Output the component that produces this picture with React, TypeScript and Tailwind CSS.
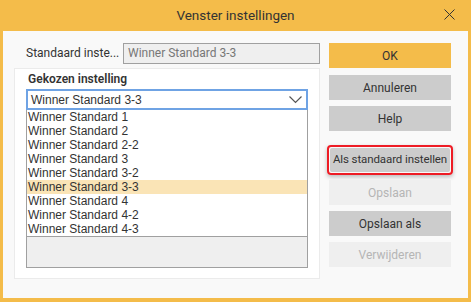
import React from 'react';

const items = [
  'Winner Standard 1',
  'Winner Standard 2',
  'Winner Standard 2-2',
  'Winner Standard 3',
  'Winner Standard 3-2',
  'Winner Standard 3-3',
  'Winner Standard 4',
  'Winner Standard 4-2',
  'Winner Standard 4-3',
];

const ui = { fontFamily: 'Roboto, "Noto Sans", sans-serif' };
const list = { fontFamily: '"Liberation Sans", Arial, sans-serif' };

function Btn({ label, kind }: { label: string; kind: 'primary' | 'gray' | 'disabled' }) {
  const cls =
    kind === 'primary'
      ? 'bg-[#f4bc4a] text-[#333]'
      : kind === 'gray'
      ? 'bg-[#cccccc] text-[#333]'
      : 'bg-[#efefef] text-[#b5b5b5]';
  return (
    <button className={`h-[25px] w-full text-[12px] whitespace-nowrap flex items-center justify-center ${cls}`} style={ui}>
      {label}
    </button>
  );
}

export default function App() {
  const selected = 'Winner Standard 3-3';
  return (
    <div className="w-[471px] h-[302px] bg-[#f4bc4a] flex flex-col px-[3px] pb-[4px]" style={ui}>
      {/* Title bar */}
      <div className="h-[31px] relative flex items-center justify-center shrink-0">
        <span className="text-[13.5px] text-[#333]">Venster instellingen</span>
        <svg className="absolute right-[13px] top-[9px]" width="11" height="11" viewBox="0 0 11 11">
          <path d="M0.5 0.5 L10.5 10.5 M10.5 0.5 L0.5 10.5" stroke="#333" strokeWidth="1" />
        </svg>
      </div>

      <div className="flex-1 bg-[#f9f9f9] flex pl-[11px] pt-[12px] gap-[9px]">
        {/* Left column */}
        <div className="w-[306px] flex flex-col">
          <div className="h-[20px] flex items-center">
            <span className="pl-[12px] w-[109px] text-[12px] text-[#333] whitespace-nowrap overflow-hidden">Standaard inste...</span>
            <div className="flex-1 h-[21px] bg-[#efefef] border border-[#a0a0a0] flex items-center px-[4px] text-[12px] text-[#777]">
              Winner Standard 3-3
            </div>
          </div>

          <div className="mt-[5px] h-[211px] bg-white border border-[#ebebeb] flex flex-col px-[11px]">
            <div className="text-[12px] font-semibold text-[#333] pt-[1px] pl-[2px] h-[20px]">Gekozen instelling</div>
            <div className="h-[21px] border-2 border-[#6fa3e4] flex items-center justify-between pl-[3px] pr-[4px] text-[12px] text-[#333]" style={list}>
              <span>{selected}</span>
              <svg width="13" height="8" viewBox="0 0 13 8">
                <path d="M0.5 0.5 L6.5 6.5 L12.5 0.5" stroke="#555" strokeWidth="1.2" fill="none" />
              </svg>
            </div>
            <div className="border-x border-[#a0a0a0] flex flex-col" style={list}>
              {items.map((it) => (
                <div
                  key={it}
                  className={`h-[14px] leading-[14px] pl-[1px] text-[12px] text-[#333] ${it === selected ? 'bg-[#fae4b6]' : ''}`}
                >
                  {it}
                </div>
              ))}
            </div>
            <div className="h-[32px] bg-[#efefef] border border-[#a0a0a0]" />
          </div>
        </div>

        {/* Right column */}
        <div className="w-[122px] flex flex-col">
          <Btn label="OK" kind="primary" />
          <div className="mt-[7px]">
            <Btn label="Annuleren" kind="gray" />
          </div>
          <div className="mt-[6px]">
            <Btn label="Help" kind="gray" />
          </div>
          <div className="mt-[14px] -mx-[2px] p-[1px] border-2 border-[#ee1c25] rounded-[4px] shadow-[0_2px_4px_rgba(0,0,0,0.25)]">
            <button className="h-[24px] w-full text-[11.5px] tracking-[-0.1px] whitespace-nowrap flex items-center justify-center bg-[#cccccc] text-[#333] rounded-[2px]" style={ui}>
              Als standaard instellen
            </button>
          </div>
          <div className="mt-[5px]">
            <Btn label="Opslaan" kind="disabled" />
          </div>
          <div className="mt-[6px]">
            <Btn label="Opslaan als" kind="gray" />
          </div>
          <div className="mt-[6px]">
            <Btn label="Verwijderen" kind="disabled" />
          </div>
        </div>
      </div>
    </div>
  );
}
